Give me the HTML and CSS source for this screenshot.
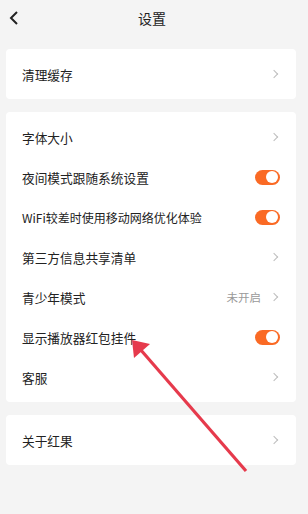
FILE: index.html
```html
<!DOCTYPE html>
<html lang="zh">
<head>
<meta charset="utf-8">
<link rel="stylesheet" href="styles.css">
</head>
<body>
<div class="page">
  <header class="topbar">
    <svg class="back" width="12" height="16" viewBox="0 0 12 16"><path d="M9 2 L3 8 L9 14" fill="none" stroke="#222" stroke-width="2"/></svg>
    <div class="title">设置</div>
  </header>
  <main class="content">
    <section class="card">
      <div class="row"><span class="label">清理缓存</span><span class="chev"></span></div>
    </section>
    <section class="card">
      <div class="row"><span class="label">字体大小</span><span class="chev"></span></div>
      <div class="row"><span class="label">夜间模式跟随系统设置</span><span class="toggle"></span></div>
      <div class="row"><span class="label label-long">WiFi较差时使用移动网络优化体验</span><span class="toggle"></span></div>
      <div class="row"><span class="label">第三方信息共享清单</span><span class="chev"></span></div>
      <div class="row"><span class="label">青少年模式</span><span class="value">未开启</span><span class="chev"></span></div>
      <div class="row"><span class="label">显示播放器红包挂件</span><span class="toggle"></span></div>
      <div class="row"><span class="label">客服</span><span class="chev"></span></div>
    </section>
    <section class="card">
      <div class="row"><span class="label">关于红果</span><span class="chev"></span></div>
    </section>
  </main>
  <svg class="arrow" width="308" height="514" viewBox="0 0 308 514">
    <line x1="246" y1="471" x2="140" y2="349" stroke="#e63a4c" stroke-width="3.2" stroke-linecap="butt"/>
    <polygon points="132,340 150,344 134,358" fill="#e63a4c"/>
  </svg>
</div>
</body>
</html>
```
FILE: styles.css
```css
* { box-sizing: border-box; }
html, body { margin: 0; padding: 0; }
body {
  background: #f4f4f4;
  font-family: "Noto Sans CJK SC", "Noto Sans", sans-serif;
  color: #222;
  width: 308px;
  height: 514px;
  overflow: hidden;
}
.page { position: relative; width: 308px; height: 514px; }
.topbar {
  position: relative;
  height: 36px;
  display: flex;
  align-items: center;
  justify-content: center;
}
.back { position: absolute; left: 8px; top: 10px; }
.title { font-size: 14px; color: #222; margin-left: -4px; }
.content {
  display: flex;
  flex-direction: column;
  gap: 13px;
  padding: 13px 12px 0 6px;
}
.card {
  background: #fff;
  border-radius: 4px;
  padding: 5px 0;
}
.row {
  height: 40px;
  display: flex;
  align-items: center;
  padding: 0 16px;
}
.label { font-size: 12.7px; flex: 1; white-space: nowrap; }
.label-long { font-size: 12px; }
.value { font-size: 11.5px; color: #9a9a9a; margin-right: 10px; }
.chev {
  width: 6px; height: 6px;
  border-top: 1px solid #bdbdbd;
  border-right: 1px solid #bdbdbd;
  transform: rotate(45deg);
  margin-right: 3px;
}
.toggle {
  position: relative;
  width: 25px; height: 15px;
  border-radius: 8px;
  background: #fa6a25;
}
.toggle::after {
  content: "";
  position: absolute;
  right: 2px; top: 1.5px;
  width: 12px; height: 12px;
  border-radius: 50%;
  background: #fff;
}
.arrow { position: absolute; left: 0; top: 0; pointer-events: none; }
```
